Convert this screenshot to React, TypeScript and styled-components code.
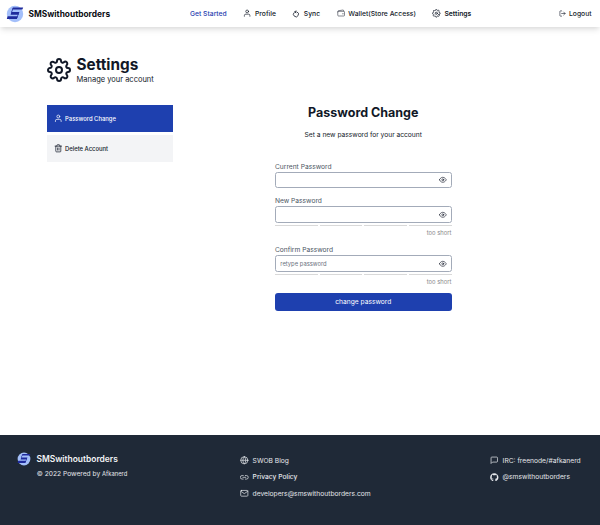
import React from "react";
import styled, { createGlobalStyle } from "styled-components";
import { FiEye, FiGlobe, FiLink2, FiLogOut, FiMail, FiMessageSquare, FiSettings, FiTrash2, FiUser } from "react-icons/fi";
import { IoWalletOutline } from "react-icons/io5";
import { FaGithub } from "react-icons/fa";

const GlobalStyle = createGlobalStyle`
  * { box-sizing: border-box; }
  html, body { margin: 0; background: #fff; }
  body { font-family: Inter, "Liberation Sans", sans-serif; font-size: 6.7px; color: #111827; overflow: hidden; }
  h1, h2, p { margin: 0; }
  svg { display: block; flex: none; }
`;

const Page = styled.div`
  display: flex;
  flex-direction: column;
  width: 600px;
  height: 525px;
`;

const Header = styled.header`
  display: flex;
  align-items: center;
  height: 27px;
  padding: 0 8.5px 0 6px;
  box-shadow: 0 4px 6px -1px rgba(0, 0, 0, 0.1), 0 2px 4px -1px rgba(0, 0, 0, 0.06);
`;

const Brand = styled.div<{ $light?: boolean }>`
  display: flex;
  align-items: center;
  gap: ${(p) => (p.$light ? 6 : 4.5)}px;
  width: ${(p) => (p.$light ? "auto" : "184px")};
  font-size: ${(p) => (p.$light ? 8.45 : 8.35)}px;
  font-weight: ${(p) => (p.$light ? 600 : 700)};
  line-height: 12px;
  color: ${(p) => (p.$light ? "#f3f4f6" : "#0b0d12")};
`;

const Nav = styled.nav`
  display: flex;
  gap: 16.6px;
  flex: 1;
`;

const NavItem = styled.a<{ $active?: boolean; $bold?: boolean }>`
  display: flex;
  align-items: center;
  gap: 3.4px;
  font-size: 6.75px;
  font-weight: ${(p) => (p.$bold ? 600 : 500)};
  white-space: nowrap;
  color: ${(p) => (p.$active ? "#1e40af" : "#111827")};
`;

const Main = styled.main`
  flex: 1;
  padding: 29px 46.5px 0;
`;

const TitleRow = styled.div`
  display: flex;
  align-items: center;
  gap: 6px;
  height: 28px;
`;

const Title = styled.h1`
  font-size: 15.3px;
  line-height: 17px;
  font-weight: 700;
`;

const Subtitle = styled.p`
  margin-top: 1px;
  font-size: 7.5px;
  line-height: 11px;
`;

const Columns = styled.div`
  display: flex;
  gap: 102px;
  margin-top: 21px;
`;

const Side = styled.aside`
  display: flex;
  flex-direction: column;
  gap: 3px;
  width: 126.5px;
`;

const SideItem = styled.a<{ $active?: boolean }>`
  display: flex;
  align-items: center;
  gap: 3px;
  height: 27px;
  padding-left: 7px;
  font-size: 5.87px;
  font-weight: 500;
  color: ${(p) => (p.$active ? "#fff" : "#111827")};
  background: ${(p) => (p.$active ? "#1e40af" : "#f3f4f6")};
`;

const Form = styled.form`
  display: flex;
  flex-direction: column;
  width: 176.5px;
`;

const FormTitle = styled.h2`
  font-size: 12.5px;
  line-height: 16px;
  font-weight: 700;
  text-align: center;
`;

const FormNote = styled.p`
  margin: 9.6px 0 23px;
  font-size: 6.67px;
  line-height: 9px;
  text-align: center;
`;

const Field = styled.div<{ $height: number }>`
  height: ${(p) => p.$height}px;
`;

const Label = styled.label`
  display: block;
  height: 9.3px;
  font-size: 6.67px;
  line-height: 8.6px;
  color: #4b5563;
`;

const InputBox = styled.div`
  display: flex;
  align-items: center;
  height: 16.5px;
  padding: 0 3.5px 0 4.3px;
  border: 1px solid #a3abb9;
  border-radius: 2.5px;
`;

const Input = styled.input`
  flex: 1;
  min-width: 0;
  padding: 0;
  border: 0;
  outline: 0;
  background: transparent;
  font: 5.85px Inter, sans-serif;
  &::placeholder { color: #6b7280; }
`;

const Strength = styled.div`
  display: grid;
  grid-template-columns: repeat(4, 1fr);
  gap: 2px;
  margin-top: 2px;
`;

const Segment = styled.span`
  height: 1px;
  background: #d9d9d9;
`;

const Hint = styled.p`
  margin-top: 3.1px;
  font-size: 5.85px;
  line-height: 8px;
  text-align: right;
  color: #898989;
`;

const Submit = styled.button`
  height: 18px;
  padding: 0;
  border: 0;
  border-radius: 3px;
  background: #1e40af;
  color: #fff;
  font: 6.67px Inter, sans-serif;
`;

const Footer = styled.footer`
  display: flex;
  height: 90px;
  padding: 17px 19px 0 16.5px;
  background: #1f2937;
  color: #e5e7eb;
`;

const FooterBrand = styled.div`
  width: 223.5px;
`;

const Copyright = styled.p`
  margin: 3px 0 0 20.3px;
  font-size: 6.67px;
  line-height: 9px;
  a { font-size: 5.85px; }
`;

const Links = styled.div<{ $width?: number }>`
  display: flex;
  flex-direction: column;
  gap: 6.6px;
  width: ${(p) => (p.$width ? `${p.$width}px` : "auto")};
  padding-top: 3.5px;
`;

const FooterLink = styled.a<{ $strong?: boolean }>`
  display: flex;
  align-items: center;
  gap: 4px;
  height: 10px;
  font-size: 6.7px;
  font-weight: ${(p) => (p.$strong ? 500 : 400)};
  white-space: nowrap;
`;

const Logo = ({ size }: { size: number }) => (
  <svg width={size} height={size} viewBox="0 0 18 18">
    <circle cx="9" cy="9" r="8.2" fill="#a3bffa" />
    <path d="M7 2.6H17.2l-.8 2H6.2zM5.4 7h8l-.9 2.8H4.6zM1.6 11.3h10.2l-.9 2.7H.8z" fill="#1e2a9c" />
    <path d="M7 2.6L5 7.4h.9L7 4.2zM12.7 9L11.2 13h-.5l1.2-4z" fill="#1e2a9c" />
  </svg>
);

const SyncIcon = () => (
  <svg width="8" height="8" viewBox="0 0 24 24" fill="none" stroke="currentColor" strokeWidth="2.4">
    <path d="M7 7.2a7.5 7.5 0 1 0 7.5-1.4" />
    <path d="M8 5.5h6M12.2 1.5L8.5 5.5l3.7 4" />
  </svg>
);

const PasswordField = ({ label, height, placeholder, meter }: { label: string; height: number; placeholder?: string; meter?: boolean }) => (
  <Field $height={height}>
    <Label>{label}</Label>
    <InputBox>
      <Input type="password" placeholder={placeholder} aria-label={label} />
      <FiEye size={7.6} />
    </InputBox>
    {meter && (
      <>
        <Strength>
          {[0, 1, 2, 3].map((n) => <Segment key={n} />)}
        </Strength>
        <Hint>too short</Hint>
      </>
    )}
  </Field>
);

export default function App() {
  return (
    <Page>
      <GlobalStyle />
      <Header>
        <Brand><Logo size={18} />SMSwithoutborders</Brand>
        <Nav>
          <NavItem $active>Get Started</NavItem>
          <NavItem><FiUser size={8.3} />Profile</NavItem>
          <NavItem><SyncIcon />Sync</NavItem>
          <NavItem><IoWalletOutline size={8.3} />Wallet(Store Access)</NavItem>
          <NavItem $bold><FiSettings size={8.6} />Settings</NavItem>
        </Nav>
        <NavItem><FiLogOut size={7} />Logout</NavItem>
      </Header>
      <Main>
        <TitleRow>
          <FiSettings size={24} />
          <div>
            <Title>Settings</Title>
            <Subtitle>Manage your account</Subtitle>
          </div>
        </TitleRow>
        <Columns>
          <Side>
            <SideItem $active><FiUser size={8.6} />Password Change</SideItem>
            <SideItem><FiTrash2 size={8.6} />Delete Account</SideItem>
          </Side>
          <Form>
            <FormTitle>Password Change</FormTitle>
            <FormNote>Set a new password for your account</FormNote>
            <PasswordField label="Current Password" height={34.2} />
            <PasswordField label="New Password" height={49.1} meter />
            <PasswordField label="Confirm Password" height={46.8} placeholder="retype password" meter />
            <Submit type="button">change password</Submit>
          </Form>
        </Columns>
      </Main>
      <Footer>
        <FooterBrand>
          <Brand $light><Logo size={14} />SMSwithoutborders</Brand>
          <Copyright>© 2022 Powered by <a>Afkanerd</a></Copyright>
        </FooterBrand>
        <Links $width={250}>
          <FooterLink><FiGlobe size={8.6} />SWOB Blog</FooterLink>
          <FooterLink $strong><FiLink2 size={8.6} />Privacy Policy</FooterLink>
          <FooterLink><FiMail size={8.6} />developers@smswithoutborders.com</FooterLink>
        </Links>
        <Links>
          <FooterLink><FiMessageSquare size={8.6} />IRC: freenode/#afkanerd</FooterLink>
          <FooterLink><FaGithub size={8.6} />@smswithoutborders</FooterLink>
        </Links>
      </Footer>
    </Page>
  );
}
